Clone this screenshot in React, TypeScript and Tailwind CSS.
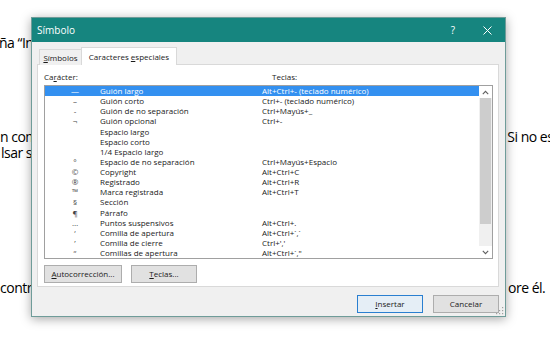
import React from 'react';

const rows: { sym: string; name: string; keys: string }[] = [
    { sym: '—', name: 'Guión largo', keys: 'Alt+Ctrl+- (teclado numérico)' },
    { sym: '–', name: 'Guión corto', keys: 'Ctrl+- (teclado numérico)' },
    { sym: '-', name: 'Guión de no separación', keys: 'Ctrl+Mayús+_' },
    { sym: '¬', name: 'Guión opcional', keys: 'Ctrl+-' },
    { sym: '', name: 'Espacio largo', keys: '' },
    { sym: '', name: 'Espacio corto', keys: '' },
    { sym: '', name: '1/4 Espacio largo', keys: '' },
    { sym: '°', name: 'Espacio de no separación', keys: 'Ctrl+Mayús+Espacio' },
    { sym: '©', name: 'Copyright', keys: 'Alt+Ctrl+C' },
    { sym: '®', name: 'Registrado', keys: 'Alt+Ctrl+R' },
    { sym: '™', name: 'Marca registrada', keys: 'Alt+Ctrl+T' },
    { sym: '§', name: 'Sección', keys: '' },
    { sym: '¶', name: 'Párrafo', keys: '' },
    { sym: '…', name: 'Puntos suspensivos', keys: 'Alt+Ctrl+.' },
    { sym: '‘', name: 'Comilla de apertura', keys: 'Alt+Ctrl+`,`' },
    { sym: '’', name: 'Comilla de cierre', keys: "Ctrl+','" },
    { sym: '“', name: 'Comillas de apertura', keys: 'Alt+Ctrl+`,"' },
];

function Chevron({ up }: { up?: boolean }) {
    return (
        <svg width="7" height="5" viewBox="0 0 7 5" className={up ? '' : 'rotate-180'}>
            <path d="M0.8 4.2 L3.5 1.3 L6.2 4.2" fill="none" stroke="#606060" strokeWidth="1.1" />
        </svg>
    );
}

export default function App() {
    return (
        <div className="relative w-[550px] h-[349px] overflow-hidden bg-white text-black" style={{ fontFamily: '"Open Sans", sans-serif' }}>
            {/* Page text behind the dialog (only the edges show) */}
            <div className="flex flex-col text-[14px] leading-[16px] whitespace-nowrap tracking-[-0.5px]">
                <div className="mt-[35px] -ml-[1px] w-[32px] overflow-hidden">ña “Insertar”</div>
                <div className="mt-[78px] flex">
                    <span className="w-[31px] shrink-0 overflow-hidden">n como</span>
                    <span className="ml-[470px]">. Si no es</span>
                </div>
                <div className="ml-[1px] w-[30px] overflow-hidden">lsar sobre</div>
                <div className="mt-[119px] flex">
                    <span className="w-[31px] shrink-0 overflow-hidden">contrarlo</span>
                    <span className="ml-[477px]">ore él.</span>
                </div>
            </div>

            {/* Dialog */}
            <div className="absolute left-[31px] top-[17px] w-[475px] h-[300px] flex flex-col border border-[#6f9c99] bg-[#f0f0f0] shadow-[0_2px_10px_rgba(0,0,0,0.35)]">
                {/* Title bar */}
                <div className="h-[24px] shrink-0 bg-[#16857f] flex items-center pl-[5px] text-white text-[10px]">
                    <span>Símbolo</span>
                    <span className="ml-auto mr-[28px] text-[10px]">?</span>
                    <svg width="9" height="9" viewBox="0 0 9 9" className="mr-[13px]">
                        <path d="M0.5 0.5 L8.5 8.5 M8.5 0.5 L0.5 8.5" stroke="white" strokeWidth="1" />
                    </svg>
                </div>

                <div className="flex-1 flex flex-col px-[5px] pt-[5px] text-[8px] text-[#1a1a1a]">
                    {/* Tabs */}
                    <div className="flex items-end pl-[2px] -mb-px relative z-10">
                        <div className="h-[16px] w-[43px] flex items-center justify-center border border-b-0 border-[#d9d9d9] bg-[#f0f0f0]">
                            <span><span className="underline">S</span>ímbolos</span>
                        </div>
                        <div className="h-[18px] w-[96px] flex items-center justify-center border border-b-0 border-[#d9d9d9] bg-white -ml-px">
                            <span>Caracteres <span className="underline">e</span>speciales</span>
                        </div>
                    </div>

                    {/* Panel */}
                    <div className="h-[223px] w-[462px] bg-white border border-[#d9d9d9] flex flex-col pl-[6px] pt-[6px]">
                        <div className="flex h-[14px] items-start">
                            <span className="w-[228px]">Ca<span className="underline">r</span>ácter:</span>
                            <span>Teclas:</span>
                        </div>
                        <div className="w-[449px] h-[174px] border border-[#a0a0a0] flex">
                            <div className="flex-1 flex flex-col">
                                {rows.map((r, i) => (
                                    <div
                                        key={r.name}
                                        className={`flex h-[10.2px] items-center leading-[10px] whitespace-nowrap ${i === 0 ? 'bg-[#3390f0] text-white' : ''}`}
                                    >
                                        <span className={`w-[55px] pl-[5px] text-center shrink-0 ${i === 0 ? '' : 'text-[#444]'}`}>{r.sym}</span>
                                        <span className="w-[162px] shrink-0">{r.name}</span>
                                        <span>{r.keys}</span>
                                    </div>
                                ))}
                            </div>
                            {/* Scrollbar */}
                            <div className="w-[13px] shrink-0 bg-[#f0f0f0] flex flex-col">
                                <div className="h-[12px] flex items-center justify-center bg-white">
                                    <Chevron up />
                                </div>
                                <div className="h-[126px] mx-[1px] bg-[#cdcdcd]" />
                                <div className="flex-1" />
                                <div className="h-[12px] flex items-center justify-center bg-white">
                                    <Chevron />
                                </div>
                            </div>
                        </div>
                        <div className="flex gap-[9px] mt-[6px]">
                            <div className="w-[78px] h-[18px] border border-[#adadad] bg-[#e1e1e1] flex items-center justify-center">
                                <span><span className="underline">A</span>utocorrección...</span>
                            </div>
                            <div className="w-[66px] h-[18px] border border-[#adadad] bg-[#e1e1e1] flex items-center justify-center">
                                <span><span className="underline">T</span>eclas...</span>
                            </div>
                        </div>
                    </div>

                    {/* Footer buttons */}
                    <div className="flex justify-end gap-[10px] mt-[8px] pr-[1px]">
                        <div className="w-[66px] h-[18px] border border-[#2a7fd0] bg-[#e5eef6] flex items-center justify-center">
                            <span><span className="underline">I</span>nsertar</span>
                        </div>
                        <div className="w-[66px] h-[18px] border border-[#adadad] bg-[#e1e1e1] flex items-center justify-center">
                            <span>Cancelar</span>
                        </div>
                    </div>
                </div>

                {/* Resize grip */}
                <svg width="9" height="9" viewBox="0 0 9 9" className="absolute right-[1px] bottom-[1px]">
                    {[[7, 1], [7, 4], [4, 4], [7, 7], [4, 7], [1, 7]].map(([x, y]) => (
                        <rect key={`${x}-${y}`} x={x} y={y} width="1.2" height="1.2" fill="#a0a0a0" />
                    ))}
                </svg>
            </div>
        </div>
    );
}
